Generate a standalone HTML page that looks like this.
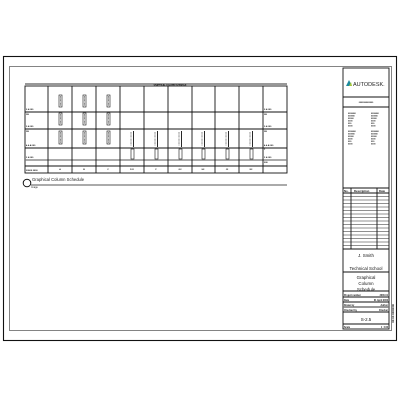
<!DOCTYPE html>
<html><head><style>html,body{margin:0;padding:0;background:#fff}svg{display:block}</style></head>
<body>
<svg width="400" height="400" viewBox="0 0 400 400" xmlns="http://www.w3.org/2000/svg" font-family="Liberation Sans, sans-serif">
<rect x="3.5" y="56.5" width="393" height="284" fill="none" stroke="#111" stroke-width="1.1"/>
<rect x="9.5" y="66.5" width="382" height="264" fill="none" stroke="#777" stroke-width="0.9"/>
<g stroke="#111" stroke-width="0.9" fill="none">
<line x1="25" y1="84" x2="287" y2="84" stroke="#777" stroke-width="1.4"/>
<rect x="25" y="86" width="262" height="87"/>
<line x1="25" y1="112" x2="287" y2="112"/>
<line x1="25" y1="129" x2="287" y2="129"/>
<line x1="25" y1="148" x2="287" y2="148"/>
<line x1="25" y1="160" x2="287" y2="160" stroke="#777" stroke-width="1.2"/>
<line x1="25" y1="166" x2="287" y2="166"/>
<line x1="48" y1="86" x2="48" y2="173"/><line x1="72" y1="86" x2="72" y2="173"/>
<line x1="96" y1="86" x2="96" y2="173"/><line x1="120" y1="86" x2="120" y2="173"/>
<line x1="144" y1="86" x2="144" y2="173"/><line x1="168" y1="86" x2="168" y2="173"/>
<line x1="192" y1="86" x2="192" y2="173"/><line x1="215" y1="86" x2="215" y2="173"/>
<line x1="239" y1="86" x2="239" y2="173"/><line x1="263" y1="86" x2="263" y2="173"/>
</g>
<text x="170" y="85.5" font-size="2" text-anchor="middle" font-weight="bold">GRAPHICAL COLUMN SCHEDULE</text>
<g font-size="2.2" fill="#111" font-weight="bold">
<text x="26" y="110">2.4 000</text><text x="26" y="115">3B</text><text x="26" y="127">3.4 000</text>
<text x="26" y="132">3B</text><text x="26" y="146">4.4 A 000</text><text x="26" y="158">3 4 000</text>
<text x="26" y="171">00000 0000</text>
<text x="264" y="110">2.4 000</text><text x="264" y="115">3B</text><text x="264" y="127">3.4 000</text>
<text x="264" y="132">3B</text><text x="264" y="146">4.4 A 000</text><text x="264" y="150">1</text><text x="264" y="158">3 4 000</text><text x="264" y="163">000</text>
</g>
<g fill="#fff" stroke="#111" stroke-width="0.6">
<rect x="59" y="95" width="3" height="12"/><rect x="83" y="95" width="3" height="12"/><rect x="107" y="95" width="3" height="12"/>
<rect x="59" y="113" width="3" height="12"/><rect x="83" y="113" width="3" height="12"/><rect x="107" y="113" width="3" height="12"/>
<rect x="59" y="131" width="3" height="13"/><rect x="83" y="131" width="3" height="13"/><rect x="107" y="131" width="3" height="13"/>
<rect x="131" y="149" width="3" height="10"/><rect x="155" y="149" width="3" height="10"/><rect x="179" y="149" width="3" height="10"/>
<rect x="202" y="149" width="3" height="10"/><rect x="226" y="149" width="3" height="10"/><rect x="250" y="149" width="3" height="10"/>
</g>
<g stroke="#444" stroke-width="0.8" stroke-dasharray="0.8 0.6">
<line x1="60.5" y1="96" x2="60.5" y2="106"/><line x1="84.5" y1="96" x2="84.5" y2="106"/><line x1="108.5" y1="96" x2="108.5" y2="106"/>
<line x1="60.5" y1="114" x2="60.5" y2="124"/><line x1="84.5" y1="114" x2="84.5" y2="124"/><line x1="108.5" y1="114" x2="108.5" y2="124"/>
<line x1="60.5" y1="132" x2="60.5" y2="143"/><line x1="84.5" y1="132" x2="84.5" y2="143"/><line x1="108.5" y1="132" x2="108.5" y2="143"/>
<line x1="131" y1="132" x2="131" y2="146"/><line x1="155" y1="132" x2="155" y2="146"/><line x1="179" y1="132" x2="179" y2="146"/>
<line x1="202" y1="132" x2="202" y2="146"/><line x1="226" y1="132" x2="226" y2="146"/><line x1="250" y1="132" x2="250" y2="146"/>
</g>
<g stroke="#111" stroke-width="0.9">
<line x1="133.5" y1="131" x2="133.5" y2="147"/><line x1="157.5" y1="131" x2="157.5" y2="147"/><line x1="181.5" y1="131" x2="181.5" y2="147"/>
<line x1="204.5" y1="131" x2="204.5" y2="147"/><line x1="228.5" y1="131" x2="228.5" y2="147"/><line x1="252.5" y1="131" x2="252.5" y2="147"/>
</g>
<g font-size="2.2" fill="#111" text-anchor="middle" font-weight="bold">
<text x="60" y="170">A</text><text x="84" y="170">B</text><text x="108" y="170">C</text><text x="132" y="170">D E</text>
<text x="156" y="170">F</text><text x="180" y="170">G2</text><text x="203" y="170">H2</text><text x="227" y="170">J2</text><text x="251" y="170">K2</text>
</g>
<circle cx="27" cy="183" r="3.8" fill="none" stroke="#111" stroke-width="1"/>
<line x1="31" y1="185" x2="287" y2="185" stroke="#777" stroke-width="1.2"/>
<text x="32" y="181" font-size="4.2" fill="#222">Graphical Column Schedule</text>
<text x="31" y="188" font-size="2.5" fill="#222">Image</text>
<g stroke="#111" stroke-width="0.9" fill="none">
<rect x="343" y="68" width="46" height="261"/>
<line x1="343" y1="97" x2="389" y2="97"/><line x1="343" y1="107" x2="389" y2="107"/>
<line x1="343" y1="188" x2="389" y2="188"/><line x1="343" y1="193" x2="389" y2="193"/>
<line x1="351" y1="188" x2="351" y2="249"/><line x1="377" y1="188" x2="377" y2="249"/>
<line x1="343" y1="249" x2="389" y2="249"/>
<line x1="343" y1="272" x2="389" y2="272"/><line x1="343" y1="291" x2="389" y2="291"/>
<line x1="343" y1="297" x2="389" y2="297"/><line x1="343" y1="302" x2="389" y2="302"/>
<line x1="343" y1="307" x2="389" y2="307" stroke="#777" stroke-width="1.4"/>
<line x1="343" y1="312" x2="389" y2="312"/><line x1="343" y1="324" x2="389" y2="324"/>
</g>
<g stroke="#222" stroke-width="0.6">
<line x1="343" y1="196.5" x2="389" y2="196.5"/><line x1="343" y1="200" x2="389" y2="200"/>
<line x1="343" y1="203.5" x2="389" y2="203.5"/><line x1="343" y1="207" x2="389" y2="207"/>
<line x1="343" y1="210.5" x2="389" y2="210.5"/><line x1="343" y1="214" x2="389" y2="214"/>
<line x1="343" y1="217.5" x2="389" y2="217.5"/><line x1="343" y1="221" x2="389" y2="221"/>
<line x1="343" y1="224.5" x2="389" y2="224.5"/><line x1="343" y1="228" x2="389" y2="228"/>
<line x1="343" y1="231.5" x2="389" y2="231.5"/><line x1="343" y1="235" x2="389" y2="235"/>
<line x1="343" y1="238.5" x2="389" y2="238.5"/><line x1="343" y1="242" x2="389" y2="242"/>
<line x1="343" y1="245.5" x2="389" y2="245.5"/>
</g>
<path d="M346 86 L349 80 L352 86 Z" fill="#1d8a9e"/><path d="M349 86 L351 82 L352 86Z" fill="#a6c83a"/>
<text x="353" y="86" font-size="5.5" fill="#222">AUTODESK.</text>
<text x="366" y="103" font-size="2" text-anchor="middle" fill="#111" font-weight="bold">0000000000000</text>
<g font-size="2" fill="#111" font-weight="bold">
<text x="348" y="114">0000000</text><text x="348" y="116.5">000000</text><text x="348" y="119">00000</text><text x="348" y="121.5">0000</text><text x="348" y="124">000</text><text x="348" y="126.5">0000</text>
<text x="371" y="114">0000000</text><text x="371" y="116.5">000000</text><text x="371" y="119">00000</text><text x="371" y="121.5">0000</text><text x="371" y="124">000</text><text x="371" y="126.5">0000</text>
<text x="348" y="132">0000000</text><text x="348" y="134.5">000000</text><text x="348" y="137">00000</text><text x="348" y="139.5">0000</text><text x="348" y="142">000</text><text x="348" y="144.5">0000</text>
<text x="371" y="132">0000000</text><text x="371" y="134.5">000000</text><text x="371" y="137">00000</text><text x="371" y="139.5">0000</text><text x="371" y="142">000</text><text x="371" y="144.5">0000</text>
</g>
<g font-size="2.8" fill="#111" font-weight="bold">
<text x="344" y="192">No.</text><text x="354" y="192">Description</text><text x="379" y="192">Date</text>
</g>
<g font-size="4.4" fill="#111" text-anchor="middle">
<text x="366" y="257">J. Smith</text>
<text x="366" y="270">Technical School</text>
<text x="366" y="279">Graphical</text>
<text x="366" y="285">Column</text>
<text x="366" y="291">Schedule</text>
<text x="366" y="321">S-2.5</text>
</g>
<g font-size="2.3" fill="#111" font-weight="bold">
<text x="344" y="296">Project number</text><text x="388" y="296" text-anchor="end">2000-01</text>
<text x="344" y="301">Date</text><text x="388" y="301" text-anchor="end">01 April 2000</text>
<text x="344" y="306">Drawn by</text><text x="388" y="306" text-anchor="end">Author</text>
<text x="344" y="311">Checked by</text><text x="388" y="311" text-anchor="end">Checker</text>
<text x="344" y="328">Scale</text><text x="388" y="328" text-anchor="end">1 : 100</text>
</g>
<text transform="translate(392,304) rotate(90)" font-size="2.8" fill="#222" font-weight="bold">00/00/00 00:00</text>
</svg>
</body></html>
